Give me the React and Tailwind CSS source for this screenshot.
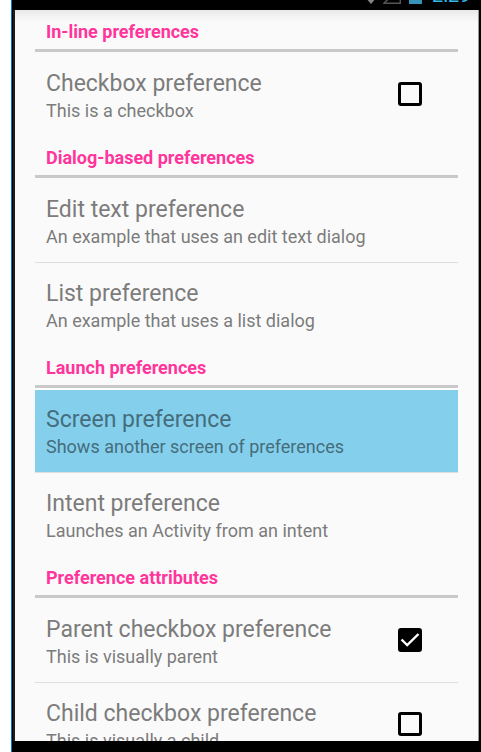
import React, { useState } from "react";

function StatusBar() {
  return (
    <header className="flex h-[10px] shrink-0 items-end justify-end overflow-hidden bg-black pr-[10px] pb-[6px]">
      <svg width="24" height="18" viewBox="0 0 24 18" className="shrink-0" fill="#858585" aria-hidden="true">
        <path d="M0 4Q12-4 24 4L12 18Z" />
      </svg>
      <svg width="18" height="18" viewBox="0 0 18 18" className="mr-2 shrink-0" fill="none" stroke="#555" aria-hidden="true">
        <path d="M1 17.3L17.3 1V17.3Z" strokeWidth="1.5" />
      </svg>
      <svg width="13" height="20" viewBox="0 0 13 20" className="mr-[10px] shrink-0" aria-hidden="true">
        <path d="M4 0h5v2h4v18H0V2h4z" fill="#3793b8" />
      </svg>
      <time className="-mb-px w-[39px] text-[20px] leading-[20px] text-[#33b5e5]">2:29</time>
    </header>
  );
}

function Category({ title, children }) {
  return (
    <section>
      <h2 className="flex h-[42px] items-center border-b-3 border-[#c9c9c9] px-[11px] pt-[4px] text-[18px] leading-[24px] font-bold text-[#ff359c]">
        {title}
      </h2>
      <div className="[&>*+*]:shadow-[inset_0_1px_#dedede]">{children}</div>
    </section>
  );
}

function Labels({ title, summary }) {
  return (
    <span className="flex flex-col pt-[4px]">
      <span className="text-[23px] leading-[30px] whitespace-nowrap">{title}</span>
      <span className="text-[18px] leading-[24px] whitespace-nowrap">{summary}</span>
    </span>
  );
}

function Preference({ title, summary, selected }) {
  return (
    <button
      type="button"
      className={
        "flex h-[84px] w-full items-center px-[11px] text-left " +
        (selected ? "bg-[#84d0ec] text-[#456d7c] shadow-[inset_0_2px_white]" : "text-[#7c7c7c]")
      }
    >
      <Labels title={title} summary={summary} />
    </button>
  );
}

function CheckPreference({ title, summary, initial = false }) {
  const [checked, setChecked] = useState(initial);
  return (
    <label className="flex h-[84px] items-center justify-between pr-[36px] pl-[11px] text-[#7c7c7c]">
      <Labels title={title} summary={summary} />
      <span className="grid shrink-0">
        <input
          type="checkbox"
          checked={checked}
          onChange={(e) => setChecked(e.target.checked)}
          className="col-start-1 row-start-1 h-[24px] w-[24px] appearance-none rounded-[3px] border-3 border-black checked:bg-black"
        />
        {checked && (
          <svg
            width="24"
            height="24"
            viewBox="0 0 24 24"
            fill="none"
            stroke="white"
            strokeWidth="2.4"
            className="pointer-events-none col-start-1 row-start-1"
            aria-hidden="true"
          >
            <path d="M3.5 11.5L9.2 17L20.5 6" />
          </svg>
        )}
      </span>
    </label>
  );
}

export default function App() {
  return (
    <div className="h-screen bg-white pl-[11px] font-['Roboto',sans-serif]">
      <div className="flex h-full flex-col border-l border-[#0078d7] bg-black pl-px">
        <StatusBar />
        <main className="mr-[2px] min-h-0 flex-1 overflow-hidden border-r border-l-2 border-r-[#999] border-l-[#1c1c1c] bg-[#fafafa]">
          <div className="bg-linear-to-b from-[#e9e9e9] to-[#fafafa] to-[12px] pr-[20px] pl-[20px]">
            <Category title="In-line preferences">
              <CheckPreference title="Checkbox preference" summary="This is a checkbox" />
            </Category>
            <Category title="Dialog-based preferences">
              <Preference title="Edit text preference" summary="An example that uses an edit text dialog" />
              <Preference title="List preference" summary="An example that uses a list dialog" />
            </Category>
            <Category title="Launch preferences">
              <Preference title="Screen preference" summary="Shows another screen of preferences" selected />
              <Preference title="Intent preference" summary="Launches an Activity from an intent" />
            </Category>
            <Category title="Preference attributes">
              <CheckPreference title="Parent checkbox preference" summary="This is visually parent" initial />
              <CheckPreference title="Child checkbox preference" summary="This is visually a child" />
            </Category>
          </div>
        </main>
        <footer className="h-[11px] shrink-0 bg-black" />
      </div>
    </div>
  );
}
